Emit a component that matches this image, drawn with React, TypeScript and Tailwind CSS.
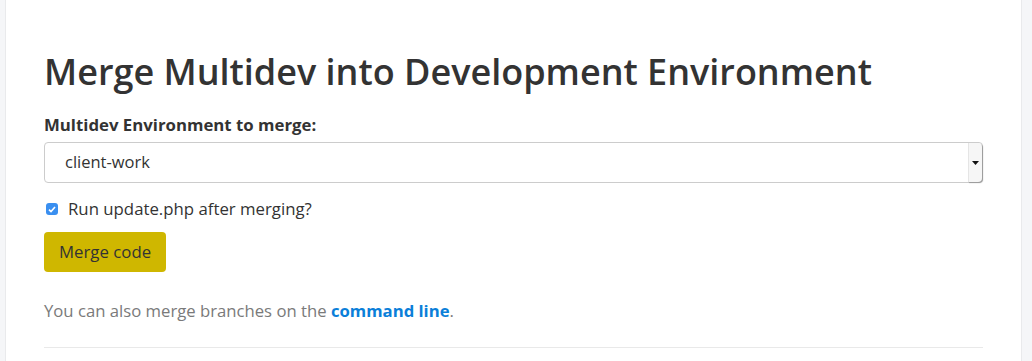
export default function App() {
  return (
    <div className="flex h-[361px] w-[1032px] overflow-hidden bg-[#f5f6f8] font-['Open_Sans',sans-serif] text-[#333]">
      <div className="ml-[5px] mr-[10px] flex-1 border-x border-[#e9eaec] bg-white pl-[38px] pr-[38px] pt-[50px]">
        <h1 className="text-[36px] font-semibold leading-[44px] text-[#333]">Merge Multidev into Development Environment</h1>
        <label className="mt-[19px] block text-[16.8px] font-bold leading-[24px]">Multidev Environment to merge:</label>
        <div className="mt-[5px] flex h-[41px] items-center rounded-[4px] border border-[#ccc] bg-white">
          <span className="flex-1 pl-[20px] text-[16.5px]">client-work</span>
          <div className="flex h-full w-[14px] items-center justify-center rounded-r-[4px] border-l border-[#e5e5e5] bg-[#f6f6f6] shadow-[1px_1px_1px_#999]">
            <svg width="7" height="4" viewBox="0 0 7 4"><path d="M0 0h7L3.5 4z" fill="#111" /></svg>
          </div>
        </div>
        <label className="mt-[14px] flex items-center gap-[10px] text-[16.8px] leading-[24px]">
          <span className="ml-[2px] flex h-[12px] w-[12px] items-center justify-center rounded-[3px] bg-[#3a8ff0]">
            <svg width="8" height="7" viewBox="0 0 8 7"><path d="M1 3.6l2 2L7 1" fill="none" stroke="white" strokeWidth="1.6" /></svg>
          </span>
          Run update.php after merging?
        </label>
        <button className="mt-[11px] h-[40px] rounded-[4px] bg-[#cfb700] px-[15px] text-[16.8px] text-[#333]">Merge code</button>
        <p className="mt-[27px] text-[16.7px] leading-[24px] text-[#7a7a7a]">
          You can also merge branches on the <a className="font-bold text-[#0b7fd9]">command line</a>.
        </p>
        <hr className="mt-[24px] border-[#e9e9e9]" />
      </div>
    </div>
  );
}
